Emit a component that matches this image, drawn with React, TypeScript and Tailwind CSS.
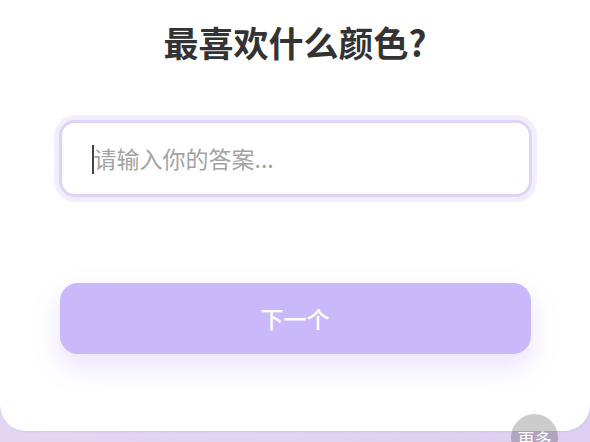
export default function App() {
  return (
    <div
      className="relative w-[590px] h-[442px] overflow-hidden bg-gradient-to-r from-[#e2d6f3] to-[#dccff1]"
      style={{ fontFamily: '"Noto Sans CJK SC", "Noto Sans", sans-serif' }}
    >
      {/* Card */}
      <div className="h-[431px] bg-white rounded-b-[26px] shadow-[0_1px_2px_rgba(0,0,0,0.06)] flex flex-col items-center pt-[19px]">
        <h1 className="text-[35px] leading-[46px] font-bold text-[#333333]">最喜欢什么颜色?</h1>

        {/* Answer input */}
        <div className="relative mt-[55px] w-[473px] h-[77px] rounded-[16px] border-[3px] border-[#ddd4f8] bg-white shadow-[0_0_0_5px_#f2eefd] flex items-center pl-[32px]">
          <span className="absolute left-[30px] top-[22px] w-[2px] h-[29px] bg-[#444]" />
          <input
            placeholder="请输入你的答案..."
            className="w-full bg-transparent outline-none text-[23px] text-[#333] placeholder-[#a3a3a3]"
          />
        </div>

        {/* Next button */}
        <button className="mt-[86px] w-[471px] h-[71px] rounded-[18px] bg-[#c9b9fb] text-white text-[23px] font-medium shadow-[0_12px_28px_rgba(150,120,240,0.22)]">
          下一个
        </button>
      </div>

      {/* More bubble */}
      <div className="absolute left-[511px] top-[414px] w-[47px] h-[47px] rounded-full bg-black/20 flex justify-center pt-[14px]">
        <span className="text-[17px] leading-[22px] text-white">更多</span>
      </div>
    </div>
  );
}
